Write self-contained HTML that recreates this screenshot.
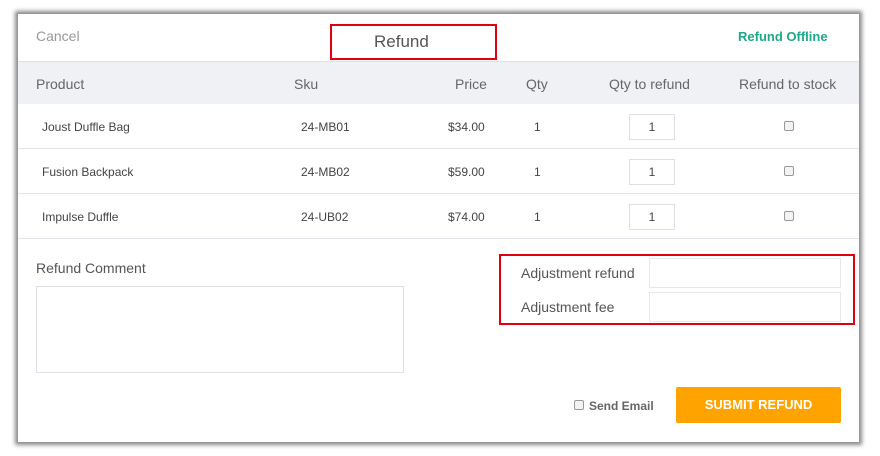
<!DOCTYPE html>
<html><head><style>
*{margin:0;padding:0;box-sizing:border-box}
body{width:880px;height:456px;background:#fff;position:relative;overflow:hidden;font-family:"Liberation Sans",sans-serif;color:#555}
.m{position:absolute;left:18px;top:14px;width:841px;height:428px;background:#fff;box-shadow:0 0 4px 3px #8a8a8a}
.a{position:absolute;white-space:nowrap}
.hdr{position:absolute;left:0;top:47px;width:841px;height:43px;background:#eff1f5;border-top:1px solid #dfe2e8}
.row{position:absolute;left:0;width:841px;height:45px;border-bottom:1px solid #e3e5ea}
.th{font-size:14px;color:#666;top:14px}
.td{font-size:12px;color:#444;top:16px}
.inp{position:absolute;width:46px;height:26px;border:1px solid #dcdfe5;font-size:12px;text-align:center;line-height:24px;color:#444;left:611px;top:10px;background:#fff}
.cb{position:absolute;width:10px;height:10px;border:1px solid #999;border-radius:2px;background:#f3f3f3}
</style></head><body>
<div class="m">
<div class="a" style="left:18px;top:14px;font-size:14px;color:#999">Cancel</div>
<div class="a" style="left:312px;top:10px;width:167px;height:36px;border:2px solid #e00010"></div>
<div class="a" style="left:356px;top:18px;font-size:17px;color:#555">Refund</div>
<div class="a" style="left:720px;top:15px;font-size:13px;color:#1fa88a;font-weight:bold">Refund Offline</div>
<div class="hdr">
<div class="a th" style="left:18px">Product</div>
<div class="a th" style="left:276px">Sku</div>
<div class="a th" style="left:437px">Price</div>
<div class="a th" style="left:508px">Qty</div>
<div class="a th" style="left:591px">Qty to refund</div>
<div class="a th" style="left:721px">Refund to stock</div>
</div>
<div class="row" style="top:90px">
<div class="a td" style="left:24px">Joust Duffle Bag</div><div class="a td" style="left:283px">24-MB01</div><div class="a td" style="left:430px">$34.00</div><div class="a td" style="left:516px">1</div><div class="inp">1</div><div class="cb" style="left:766px;top:17px"></div></div>
<div class="row" style="top:135px">
<div class="a td" style="left:24px">Fusion Backpack</div><div class="a td" style="left:283px">24-MB02</div><div class="a td" style="left:430px">$59.00</div><div class="a td" style="left:516px">1</div><div class="inp">1</div><div class="cb" style="left:766px;top:17px"></div></div>
<div class="row" style="top:180px">
<div class="a td" style="left:24px">Impulse Duffle</div><div class="a td" style="left:283px">24-UB02</div><div class="a td" style="left:430px">$74.00</div><div class="a td" style="left:516px">1</div><div class="inp">1</div><div class="cb" style="left:766px;top:17px"></div></div>
<div class="a" style="left:18px;top:246px;font-size:14px;color:#555">Refund Comment</div>
<div class="a" style="left:18px;top:272px;width:368px;height:87px;border:1px solid #dcdfe5"></div>
<div class="a" style="left:481px;top:240px;width:356px;height:71px;border:2px solid #e00010"></div>
<div class="a" style="left:503px;top:251px;font-size:14px;color:#555">Adjustment refund</div>
<div class="a" style="left:631px;top:244px;width:192px;height:30px;border:1px solid #e6e8ec"></div>
<div class="a" style="left:503px;top:285px;font-size:14px;color:#555">Adjustment fee</div>
<div class="a" style="left:631px;top:278px;width:192px;height:30px;border:1px solid #e6e8ec"></div>
<div class="cb" style="left:556px;top:386px"></div>
<div class="a" style="left:571px;top:385px;font-size:12px;font-weight:bold;color:#666">Send Email</div>
<div class="a" style="left:658px;top:373px;width:165px;height:36px;background:#ffa300;border-radius:2px;color:#fff;font-weight:bold;font-size:13px;text-align:center;line-height:36px">SUBMIT REFUND</div>
</div>
</body></html>
